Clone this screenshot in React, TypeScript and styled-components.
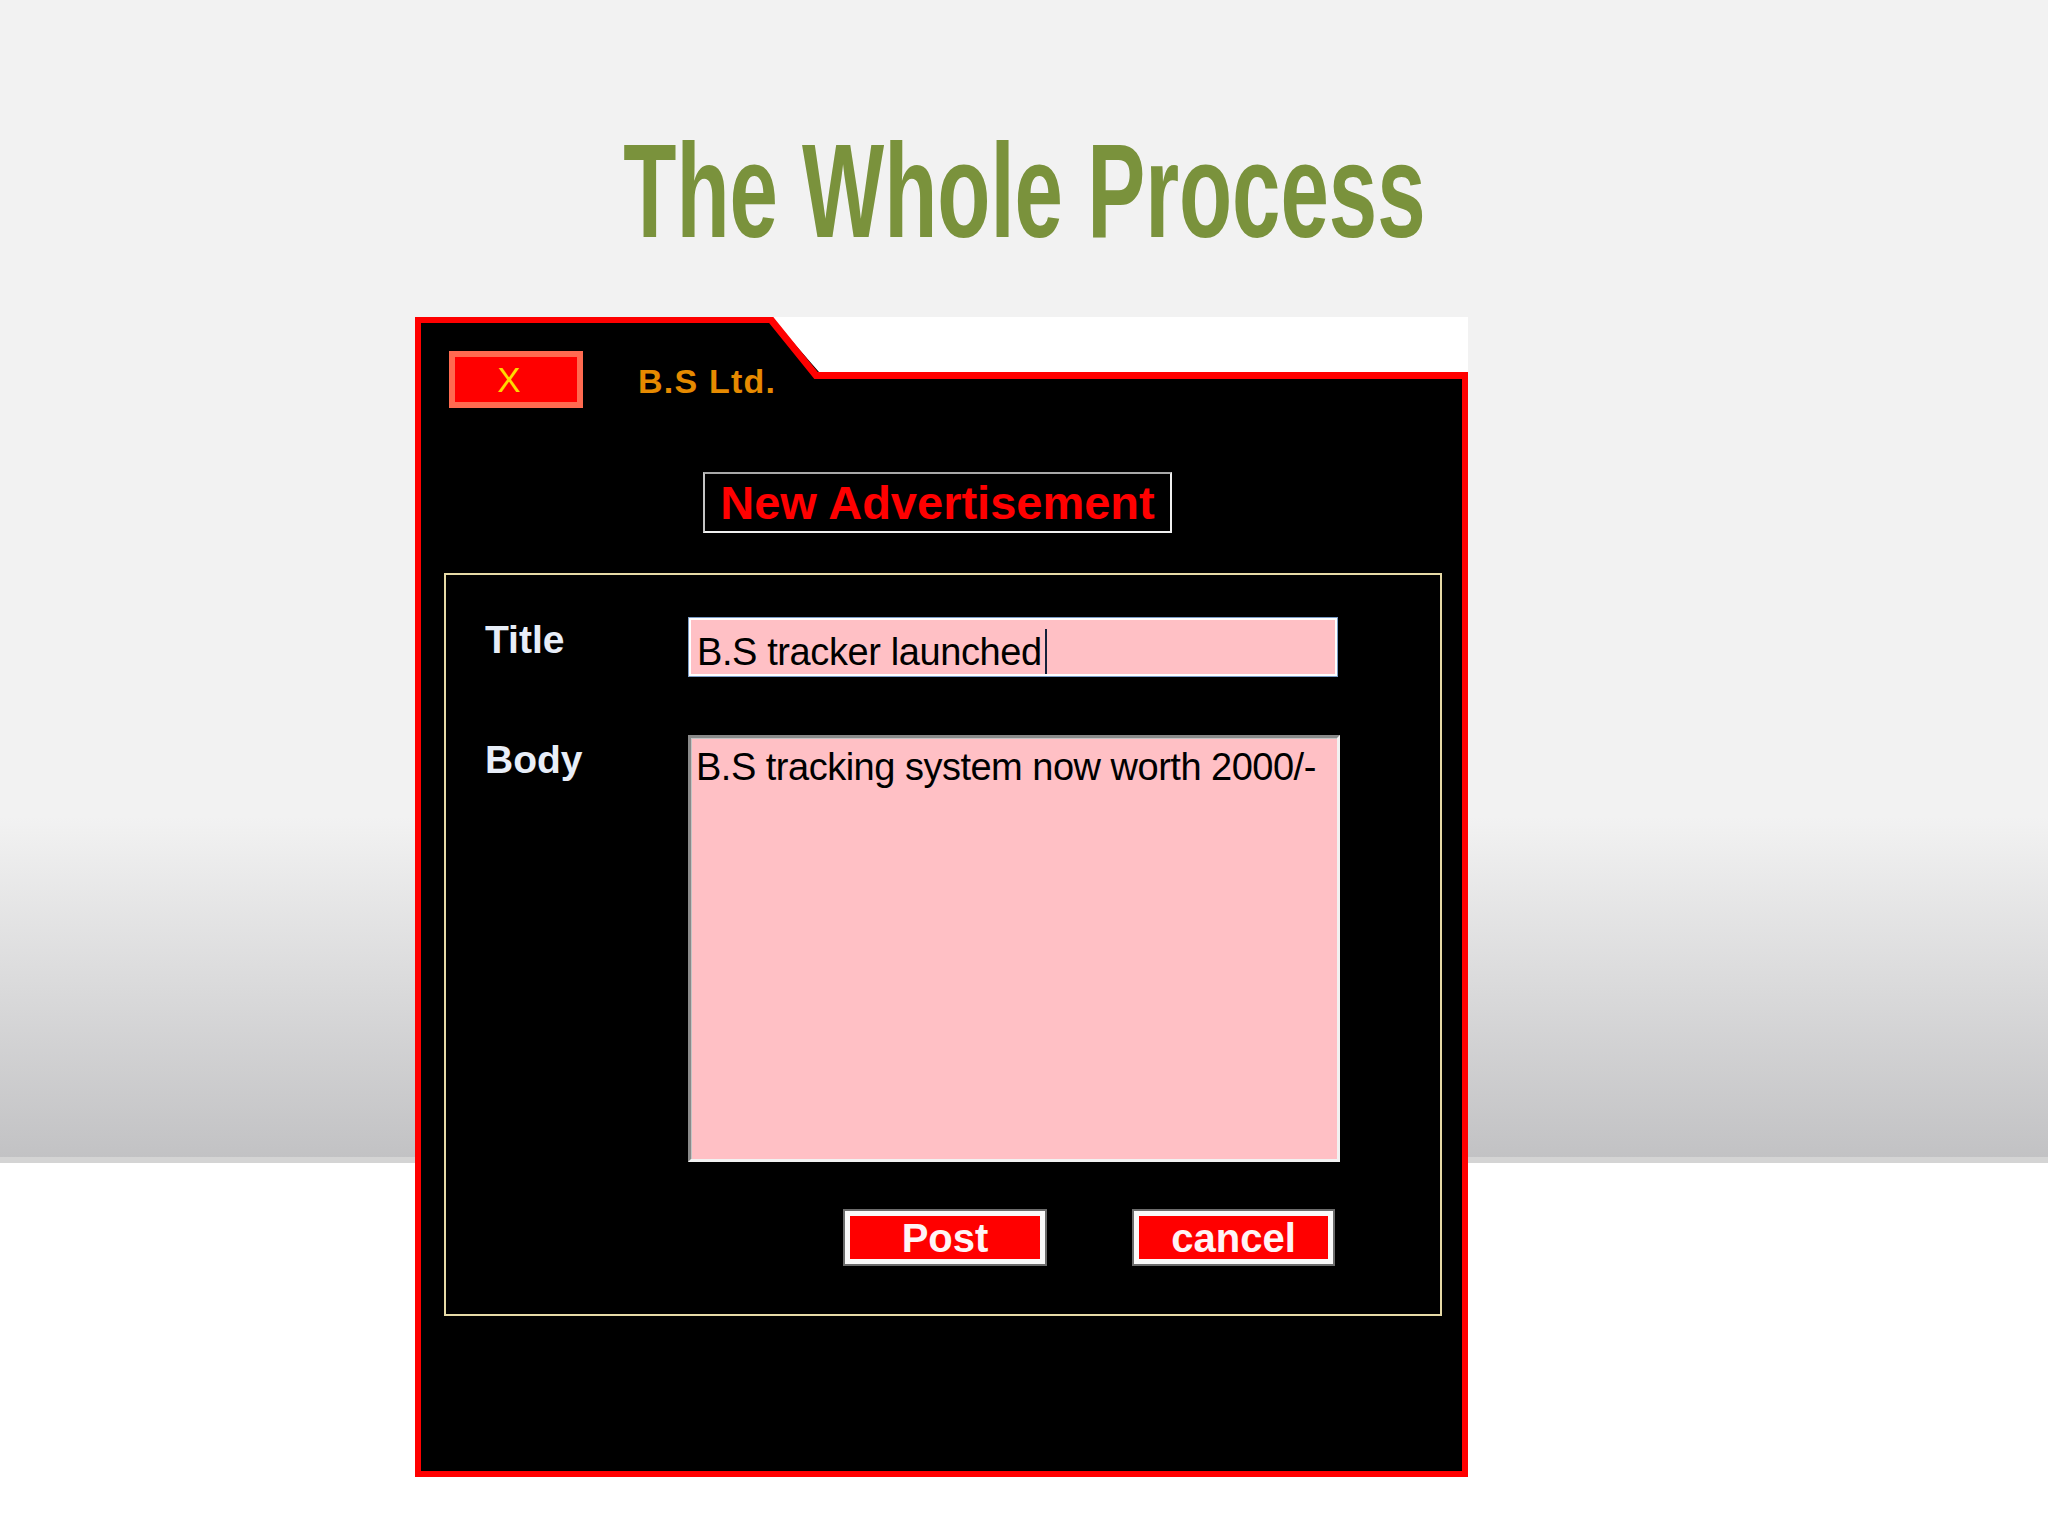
import React from "react";
import styled, { createGlobalStyle } from "styled-components";

const Global = createGlobalStyle`
  html, body { margin: 0; padding: 0; background: #ffffff; }
  #root { width: 2048px; }
`;

const FONT = `"Liberation Sans", Arial, sans-serif`;

const Page = styled.div`
  width: 2048px;
  height: 1536px;
  box-sizing: border-box;
  padding-top: 125px;
  display: flex;
  flex-direction: column;
  background: linear-gradient(
    to bottom,
    #f2f2f2 0px,
    #f2f2f2 817px,
    #c2c2c4 1157px,
    #d4d4d4 1157px,
    #d4d4d4 1163px,
    #ffffff 1163px,
    #ffffff 1536px
  );
`;

const Heading = styled.h1`
  margin: 0;
  height: 133px;
  text-align: center;
  font-family: ${FONT};
  font-weight: bold;
  font-size: 133px;
  line-height: 133px;
  color: #7a923c;
  white-space: nowrap;
`;

const HeadingText = styled.span`
  display: inline-block;
  transform: scaleX(0.654);
  transform-origin: center;
`;

const Window = styled.section`
  position: relative;
  margin: 59px 0 0 415px;
  width: 1053px;
  height: 1160px;
  box-sizing: border-box;
  border: 6px solid #ff0000;
  background: #000000;
  display: flex;
  flex-direction: column;
  align-items: flex-start;
`;

const Notch = styled.svg`
  position: absolute;
  top: -6px;
  left: -6px;
  width: 1053px;
  height: 70px;
  pointer-events: none;
`;

const TitleBar = styled.div`
  display: flex;
  align-items: flex-start;
  padding: 28px 0 0 28px;
`;

const CloseButton = styled.div`
  width: 134px;
  height: 57px;
  box-sizing: border-box;
  border: 6px solid #ff6a50;
  background: #ff0000;
  color: #ffd800;
  font-family: ${FONT};
  font-size: 35px;
  display: flex;
  align-items: center;
  justify-content: center;
  padding-right: 14px;
`;

const Brand = styled.div`
  margin: 13px 0 0 55px;
  font-family: ${FONT};
  font-weight: bold;
  font-size: 34px;
  line-height: 34px;
  letter-spacing: 1.2px;
  color: #e68a00;
`;

const FormTitle = styled.div`
  margin: 64px 0 0 282px;
  width: 469px;
  height: 61px;
  box-sizing: border-box;
  border: 2px solid;
  border-color: #a8a8a8 #f0f0f0 #f0f0f0 #c4c4c4;
  display: flex;
  align-items: center;
  justify-content: center;
  font-family: ${FONT};
  font-weight: bold;
  font-size: 47px;
  line-height: 47px;
  color: #ff0000;
`;

const Group = styled.div`
  margin: 40px 0 0 23px;
  width: 998px;
  height: 743px;
  box-sizing: border-box;
  border: 2px solid #e6daa6;
  padding: 42px 0 0 39px;
  display: grid;
  grid-template-columns: 203px 652px;
  align-content: start;
  align-items: start;
`;

const Label = styled.div<{ $top: number }>`
  margin-top: ${(p) => p.$top}px;
  font-family: ${FONT};
  font-weight: bold;
  font-size: 39px;
  line-height: 39px;
  color: #e8eef8;
`;

const TextInput = styled.div`
  width: 650px;
  height: 60px;
  box-sizing: border-box;
  border: 1px solid #7a9cc6;
  box-shadow: inset 0 0 0 2px #ffffff;
  background: #ffc0c5;
  padding: 11px 0 0 8px;
  font-family: ${FONT};
  font-size: 38px;
  line-height: 38px;
  letter-spacing: -0.4px;
  color: #000000;
  white-space: nowrap;
`;

const Caret = styled.span`
  display: inline-block;
  width: 2px;
  height: 45px;
  margin-left: 3px;
  vertical-align: -9px;
  background: #14203a;
`;

const TextArea = styled.div`
  margin-top: 58px;
  width: 652px;
  height: 427px;
  box-sizing: border-box;
  border: 3px solid;
  border-color: #8a8a8a #f2f2f2 #f2f2f2 #8a8a8a;
  box-shadow: inset 1px 1px 0 #c4c4c4;
  background: #ffc0c5;
  padding: 10px 0 0 5px;
  font-family: ${FONT};
  font-size: 38px;
  line-height: 38px;
  letter-spacing: -0.5px;
  color: #000000;
  white-space: nowrap;
`;

const ButtonRow = styled.div`
  grid-column: 2;
  margin: 47px 0 0 155px;
  display: flex;
  gap: 85px;
`;

const ActionButton = styled.div<{ $w: number }>`
  width: ${(p) => p.$w}px;
  height: 57px;
  box-sizing: border-box;
  border: 2px solid #6c6c6c;
  box-shadow: inset 0 0 0 5px #fafafa;
  background: #ff0000;
  display: flex;
  align-items: center;
  justify-content: center;
  font-family: ${FONT};
  font-weight: bold;
  font-size: 40px;
  line-height: 40px;
  color: #fff4f6;
`;

export default function App() {
  return (
    <>
      <Global />
      <Page>
        <Heading>
          <HeadingText>The Whole Process</HeadingText>
        </Heading>
        <Window>
          <Notch viewBox="0 0 1053 70">
            <polygon points="356,0 1053,0 1053,55 404,55" fill="#ffffff" />
            <polyline
              points="353,-1 401,58.5 1053,58.5"
              fill="none"
              stroke="#ff0000"
              strokeWidth="7"
            />
          </Notch>
          <TitleBar>
            <CloseButton>X</CloseButton>
            <Brand>B.S Ltd.</Brand>
          </TitleBar>
          <FormTitle>New Advertisement</FormTitle>
          <Group>
            <Label $top={3}>Title</Label>
            <TextInput>
              B.S tracker launched
              <Caret />
            </TextInput>
            <Label $top={63}>Body</Label>
            <TextArea>B.S tracking system now worth 2000/-</TextArea>
            <ButtonRow>
              <ActionButton $w={204}>Post</ActionButton>
              <ActionButton $w={203}>cancel</ActionButton>
            </ButtonRow>
          </Group>
        </Window>
      </Page>
    </>
  );
}
